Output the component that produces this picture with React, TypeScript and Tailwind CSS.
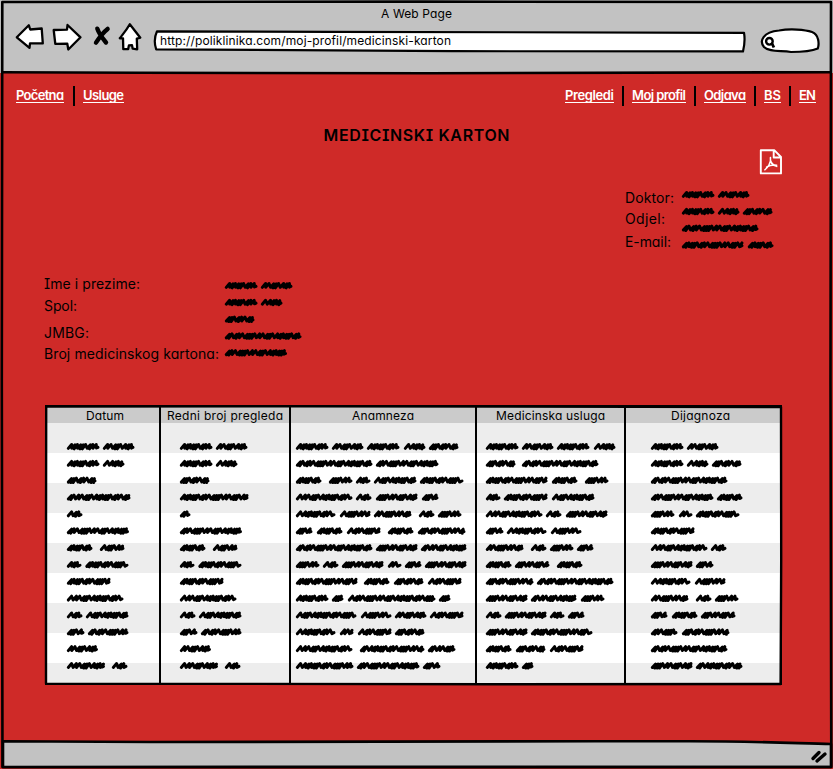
import { useLayoutEffect, useRef, useState } from "react";

type FitProps = { text: string; width: number; className?: string };

// A single line of lettering, tracked so that it fills the given width.
function Fit({ text, width, className = "" }: FitProps) {
  const ref = useRef<HTMLSpanElement>(null);
  const [spacing, setSpacing] = useState(0);
  useLayoutEffect(() => {
    const el = ref.current;
    if (!el) return;
    el.style.letterSpacing = "0px";
    const natural = el.getBoundingClientRect().width;
    setSpacing((width - natural) / (text.length - 1));
    el.style.letterSpacing = `${(width - natural) / (text.length - 1)}px`;
  }, [text, width]);
  return (
    <span className={`block shrink-0 whitespace-nowrap ${className}`} style={{ width }}>
      <span ref={ref} className="inline-block" style={{ letterSpacing: spacing }}>
        {text}
      </span>
    </span>
  );
}

// Pen steps of the scribble: tight loops run together, wide ones leave a gap.
const pen = [3.4, 2.4, 2.4, 4.8, 2.4, 3.4, 5, 2.4, 2.4, 2.4, 4.8, 3.4, 4.8, 2.4, 2.4, 5, 3.4, 2.4];

// One scribbled word: a slanted zigzag with tight and loose loops.
function wordPath(from: number, to: number, y: number) {
  const start = from + 1.3;
  const end = to - 1;
  let k = Math.round(to - from) * 5;
  let x = start;
  let d = `M${x} ${y + 1.7}`;
  while (x < end - 2.5) {
    const step = pen[k++ % pen.length];
    const dense = step < 3;
    const top = y - 2.2 + (dense ? 0.4 : 0);
    const bottom = y + 1.8 + (dense ? 0.4 : -0.2);
    const peak = Math.min(x + 3.3, end);
    d += `L${peak.toFixed(1)} ${top.toFixed(1)}`;
    x += step;
    if (x < end - 1.5) d += `L${x.toFixed(1)} ${bottom.toFixed(1)}`;
  }
  d += `L${end - 1.5} ${y + 1.3}L${end} ${y + 0.6}`;
  return d;
}

function Scribble({ lines, step, width }: { lines: string[]; step: number; width: number }) {
  const height = Math.ceil((lines.length - 1) * step + 10);
  return (
    <svg width={width} height={height} className="block shrink-0 overflow-visible" fill="none" stroke="#000" strokeWidth="3" strokeLinecap="round" strokeLinejoin="round">
      {lines.map((line, i) =>
        line.split(" ").map((word) => {
          const [a, b] = word.split("-").map(Number);
          return <path key={`${i}-${word}`} d={wordPath(a, b, 4.7 + i * step)} />;
        }),
      )}
    </svg>
  );
}

const first = ["0-32 36-67", "0-32 36-57", "0-29", "0-63", "0-15", "0-61.5", "0-25 33-57", "0-14 18.5-61", "0-43", "0-56", "0-15 19-61", "0-17 21-61", "0-30.5", "0-37.5 45-60"];

const columns = [
  { title: "Datum", titleWidth: 38, cell: "w-[112px] pl-[20px]", head: "w-[112px] pl-[39px]", lines: first },
  {
    title: "Redni broj pregleda", titleWidth: 116, cell: "w-[130px] pl-[19px] border-l-2", head: "w-[130px] pl-[6px] border-l-2",
    lines: first.map((l, i) => (i === 3 ? "0-68" : i === 4 ? "0-10" : l)),
  },
  {
    title: "Anamneza", titleWidth: 62, cell: "w-[186px] pl-[5px] border-l-2", head: "w-[186px] pl-[61px] border-l-2",
    lines: ["0-32 36-67 71-103 108-129 133-162", "0-76 80-142", "0-25 33-56 60-74 78-120 124-167", "0-56 60-75 80-121 126-142", "0-39 44-74 78-115 123-138 142-165", "0-16 21-46 51-84 92-117 122-169", "0-76 80-121 125-170", "0-23 27-42 46-87 92-105 109-125 129-170", "0-61 68-93 98-127 132-165", "0-32 36-47 52-139 143-154", "0-60 65-95 99-130 134-167", "0-39 44-57 62-95 99-128", "0-56 64-128 132-159", "0-57 61-123 127-144"],
  },
  {
    title: "Medicinska usluga", titleWidth: 109, cell: "w-[149px] pl-[9px] border-l-2", head: "w-[149px] pl-[19px] border-l-2",
    lines: ["0-32 36-67 71-103 108-129", "0-29 36-112", "0-61 66-91 99-122", "0-14 18-61 66-108", "0-56 60-75 80-121", "0-17 21-60 65-95", "0-37 45-60 64-87 91-107", "0-25 29-63 71-96", "0-47 51-127", "0-41 45-90 95-118", "0-15 19-60 64-78 82-98", "0-41 45-106", "0-25 30-59 64-97", "0-32 36-47"],
  },
  {
    title: "Dijagnoza", titleWidth: 59, cell: "w-[155px] pl-[25px] border-l-2", head: "w-[155px] pl-[45px] border-l-2",
    lines: ["0-32 36-67", "0-32 36-57 61-90", "0-76", "0-62 66-91", "0-23 28-41 45-88", "0-43", "0-56 60-75", "0-41 45-62", "0-39 44-74", "0-37 45-60 64-87", "0-16 21-46 50-84", "0-26 31-78", "0-76", "0-41 45-91"],
  },
];

function NavLink({ text, width }: { text: string; width: number }) {
  return (
    <a className="-mt-[1px] block h-[14px] border-b border-white text-[13px] leading-[13px] font-semibold text-white">
      <Fit text={text} width={width} />
    </a>
  );
}

function Bar({ className }: { className: string }) {
  return <span className={`h-[20px] w-[2px] shrink-0 bg-black ${className}`} />;
}

function BrowserIcons() {
  return (
    <svg width="128" height="30" viewBox="14 22 128 30" className="block shrink-0" fill="#fff" stroke="#000" strokeWidth="2.3" strokeLinejoin="round" strokeLinecap="round">
      <path d="M16.8 37.3 L28.8 25.2 L30.2 29.5 L41.7 28.5 L42.8 43.4 L30 43.3 L29.5 47.8 Z" />
      <path d="M53.7 30 L67 29.7 L67.5 25 L80.5 37.3 L68.3 49.5 L67.3 43.7 L55.3 43.8 Z" />
      <path fill="none" strokeWidth="4.4" d="M97.3 28.7 C99 34 103.5 39.5 106 42.5 M107.6 28.9 C103 32.5 99 38 96 42.6" />
      <path d="M129.8 24.2 L140.3 37.7 L136.8 38.6 L137.2 49.4 L132.7 48.7 L132 45.2 L128.9 45.5 L128.2 49 L123.3 49.2 L123 38.4 L119.8 38.3 C123 34 126.5 30 129.8 24.2 Z" />
    </svg>
  );
}

const label = "text-[14px] leading-[20px]";

export default function App() {
  return (
    <div className="relative flex h-[769px] w-[833px] flex-col overflow-hidden bg-[#cf2a28] text-black [font-family:Inter,'Open_Sans',sans-serif] [font-feature-settings:'cv11','cv08']">
      <header className="h-[73px] shrink-0 bg-[#c2c2c2]">
        <div className="flex h-[22px] justify-center pt-[6px] text-[12px] leading-[16px]">
          <Fit text="A Web Page" width={71} />
        </div>
        <div className="flex h-[36px] items-start pl-[14px]">
          <BrowserIcons />
          <div className="relative ml-[10px] mt-[7px] h-[24px] w-[596px] shrink-0">
            <svg width="596" height="24" className="absolute inset-0" fill="#fff" stroke="#000" strokeWidth="2.2" strokeLinejoin="round">
              <path d="M5 2.3 L180 2.8 L592 3.8 Q593.5 12 591 22.4 L300 22.2 L4.2 20.3 Q1 11 5 2.3 Z" />
            </svg>
            <div className="relative pt-[4px] pl-[8px] text-[12px] leading-[16px]">
              <Fit text="http://poliklinika.com/moj-profil/medicinski-karton" width={291} />
            </div>
          </div>
          <svg width="62" height="28" viewBox="759 27 62 28" className="ml-[11px] mt-[5px] block shrink-0" fill="#fff" stroke="#000" strokeWidth="2.2">
            <path d="M779 30.5 C790 28.5 805 29.5 812 32 C819 34.5 819.3 44 817.8 48.5 C812 51 800 52 791 52 C779 50.5 769 52 764 47 C759 41 763 32 779 30.5 Z" />
            <circle cx="769.4" cy="41.3" r="3.3" strokeWidth="2.4" />
            <path strokeWidth="2.8" d="M772 43.5 L773.9 47.5" />
          </svg>
        </div>
      </header>

      <nav className="flex h-[49px] shrink-0 items-start pt-[13px]">
        <div className="flex items-center pl-[16px]">
          <NavLink text="Početna" width={48} />
          <Bar className="mr-[8px] ml-[9px]" />
          <NavLink text="Usluge" width={41} />
        </div>
        <div className="ml-auto flex items-center pr-[17px]">
          <NavLink text="Pregledi" width={49} />
          <Bar className="mx-[8px]" />
          <NavLink text="Moj profil" width={54} />
          <Bar className="mx-[8px]" />
          <NavLink text="Odjava" width={42} />
          <Bar className="mx-[8px]" />
          <NavLink text="BS" width={17} />
          <Bar className="mx-[8px]" />
          <NavLink text="EN" width={17} />
        </div>
      </nav>

      <main className="flex flex-1 flex-col">
        <h1 className="flex h-[27px] justify-center pt-[3px] text-[16px] leading-[20px] font-semibold">
          <Fit text="MEDICINSKI KARTON" width={186} />
        </h1>
        <div className="flex h-[38px] justify-end pr-[50px]">
          <svg width="24" height="26" viewBox="0 0 24 26" className="block" fill="none" stroke="#fff" strokeWidth="1.9" strokeLinejoin="round" strokeLinecap="round">
            <path d="M1.8 1.3 H15.5 L22 8 V24.4 H1.8 Z M14.7 1.3 V8.5 H22" />
            <path strokeWidth="1.5" d="M11.4 8.5 C10.8 12.8 12.5 15.7 17.7 17.4 M11.5 8.5 C12.3 13 8.7 19.2 5.8 20.8 M7.5 18.2 C10.8 16.2 14.2 15.8 17.7 16.2" />
          </svg>
        </div>
        <section className="flex h-[78px] pl-[625px]">
          <div className={`w-[57px] pt-[1px] ${label}`}>
            <Fit text="Doktor:" width={49} />
            <Fit text="Odjel:" width={40} className="mt-[1px]" />
            <Fit text="E-mail:" width={46} className="mt-[3px]" />
          </div>
          <div className="pt-[2.5px]">
            <Scribble lines={["0-32 36-67", "0-32 36-57 61-90", "0-76", "0-61 66-91"]} step={16.8} width={92} />
          </div>
        </section>
        <section className="flex h-[140px] pt-[9px] pl-[44px]">
          <div className={`w-[181px] ${label}`}>
            <Fit text="Ime i prezime:" width={96} />
            <Fit text="Spol:" width={33} className="mt-[2px]" />
            <Fit text="JMBG:" width={45} className="mt-[7px]" />
            <Fit text="Broj medicinskog kartona:" width={175} className="mt-[1px]" />
          </div>
          <div className="pt-[6.5px]">
            <Scribble lines={["0-32 36-67", "0-32 36-57", "0-29", "0-76", "0-61.5"]} step={16.8} width={78} />
          </div>
        </section>
        <section className="ml-[45px] flex h-[280px] w-[737px] flex-col border-2 border-black">
          <div className="flex h-[16px] bg-[#cbcbcb] text-[12px] leading-[17px]">
            {columns.map((c) => (
              <div key={c.title} className={`shrink-0 border-black ${c.head}`}>
                <Fit text={c.title} width={c.titleWidth} />
              </div>
            ))}
          </div>
          <div className="flex flex-1 bg-[repeating-linear-gradient(#ededed_0_30px,#fff_30px_60px)]">
            {columns.map((c) => (
              <div key={c.title} className={`shrink-0 border-black pt-[19px] ${c.cell}`}>
                <Scribble lines={c.lines} step={16.85} width={100} />
              </div>
            ))}
          </div>
        </section>
      </main>

      <svg width="833" height="769" className="pointer-events-none absolute inset-0" fill="none" stroke="#000" strokeWidth="2.6" strokeLinejoin="round">
        <path fill="#c2c2c2" d="M3 741.3 L150 742 C300 742.3 500 741 690 741.3 C760 741.3 800 743.5 831 744 L831 767 L420 766.7 L3 767 Z" />
        <path d="M2.3 2 L420 1.6 L831 2 L830.5 380 L831.3 767 L420 767.3 L2.5 767 L1.8 380 Z" />
        <path d="M2 72.2 L140 72.8 L430 73.2 L831 72.2" />
        <path d="M46.2 406.5 L300 406.2 L781 407 L781.2 560 L780.6 684 L500 684.2 L46 683.6 L46 540 Z" strokeWidth="2.4" />
        <path strokeWidth="3.4" strokeLinecap="round" d="M813 758.5 L819 752.5 M817 761 L825 754" />
      </svg>
    </div>
  );
}
